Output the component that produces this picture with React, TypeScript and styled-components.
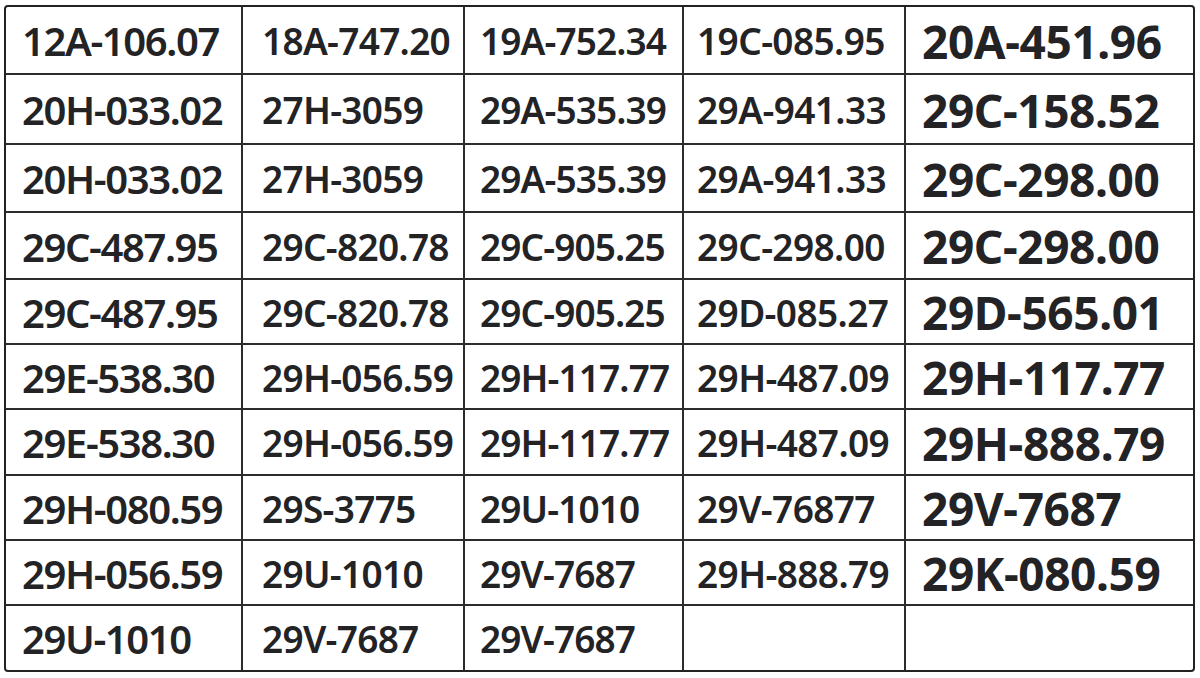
import styled, { createGlobalStyle } from 'styled-components'

const Global = createGlobalStyle`
  html, body {
    margin: 0;
    padding: 0;
    background: #ffffff;
  }
  body {
    font-family: "Noto Sans", "Open Sans", sans-serif;
  }
`

const Page = styled.div`
  width: 1200px;
  height: 678px;
  padding: 5px 5px 0 4px;
  box-sizing: border-box;
`

const Grid = styled.div`
  display: grid;
  grid-template-columns: 235px 220px 217px 220px 287px;
  grid-template-rows: 66px 68px 66px 65px 63px 63px 64px 63px 63px 64px;
  gap: 2px;
  width: 1191px;
  height: 667px;
  box-sizing: border-box;
  border: 2px solid #222;
  border-radius: 4px;
  background: #2c2c2c;
  overflow: hidden;
`

const Cell = styled.div<{ $pad: number; $size: number; $weight: number; $track: number }>`
  display: flex;
  align-items: center;
  background: #fff;
  padding-left: ${p => p.$pad}px;
  padding-top: 1px;
  font-size: ${p => p.$size}px;
  font-weight: ${p => p.$weight};
  letter-spacing: ${p => p.$track}px;
  color: #232326;
  white-space: nowrap;
`

const cols = [
  { pad: 16, size: 40, weight: 600, track: -1.4 },
  { pad: 19, size: 37, weight: 600, track: -0.7 },
  { pad: 15, size: 37, weight: 600, track: -0.9 },
  { pad: 13, size: 37, weight: 600, track: -0.6 },
  { pad: 16, size: 46, weight: 700, track: -0.4 },
]

const rows = [
  ['12A-106.07', '18A-747.20', '19A-752.34', '19C-085.95', '20A-451.96'],
  ['20H-033.02', '27H-3059', '29A-535.39', '29A-941.33', '29C-158.52'],
  ['20H-033.02', '27H-3059', '29A-535.39', '29A-941.33', '29C-298.00'],
  ['29C-487.95', '29C-820.78', '29C-905.25', '29C-298.00', '29C-298.00'],
  ['29C-487.95', '29C-820.78', '29C-905.25', '29D-085.27', '29D-565.01'],
  ['29E-538.30', '29H-056.59', '29H-117.77', '29H-487.09', '29H-117.77'],
  ['29E-538.30', '29H-056.59', '29H-117.77', '29H-487.09', '29H-888.79'],
  ['29H-080.59', '29S-3775', '29U-1010', '29V-76877', '29V-7687'],
  ['29H-056.59', '29U-1010', '29V-7687', '29H-888.79', '29K-080.59'],
  ['29U-1010', '29V-7687', '29V-7687', '', ''],
]

export default function App() {
  return (
    <>
      <Global />
      <Page>
        <Grid>
          {rows.map((row, r) =>
            row.map((plate, c) => (
              <Cell
                key={r + '-' + c}
                $pad={cols[c].pad}
                $size={cols[c].size}
                $weight={cols[c].weight}
                $track={cols[c].track}
              >
                {plate}
              </Cell>
            ))
          )}
        </Grid>
      </Page>
    </>
  )
}
